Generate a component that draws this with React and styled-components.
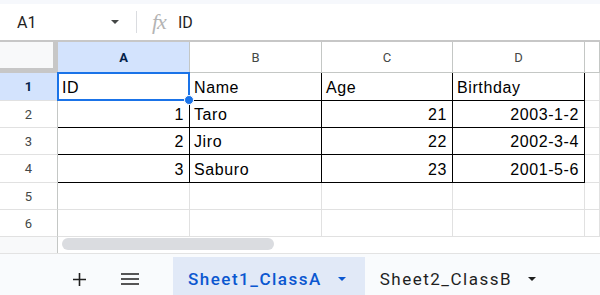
import React from 'react'
import styled, { createGlobalStyle } from 'styled-components'

const GlobalStyle = createGlobalStyle`
  html, body {
    margin: 0;
    padding: 0;
    background: #fff;
    font-family: Roboto, 'Liberation Sans', sans-serif;
  }
`

const COLS = ['58px', '132px', '132px', '131px', '132px', '1fr']
const ROW_HEIGHTS = [28, 27, 27, 28, 27, 27]

const data = [
  ['ID', 'Name', 'Age', 'Birthday'],
  [1, 'Taro', 21, '2003-1-2'],
  [2, 'Jiro', 22, '2002-3-4'],
  [3, 'Saburo', 23, '2001-5-6'],
]

const Page = styled.div`
  width: 600px;
  height: 295px;
  overflow: hidden;
  display: flex;
  flex-direction: column;
`

const TopStrip = styled.div`
  height: 4px;
  background: #f6f8fc;
`

const FormulaBar = styled.div`
  height: 36px;
  display: flex;
  align-items: center;
  border-bottom: 2px solid #c7c7c7;
  background: #fff;
`

const NameBox = styled.div`
  width: 137px;
  box-sizing: border-box;
  padding-left: 17px;
  display: flex;
  align-items: center;
  justify-content: space-between;
  font-size: 16px;
  color: #1f1f1f;
  padding-right: 17px;
  border-right: 1px solid #dadce0;
  height: 22px;
`

const Caret = styled.span`
  width: 0;
  height: 0;
  border-left: 4.5px solid transparent;
  border-right: 4.5px solid transparent;
  border-top: 4.5px solid ${p => p.$color || '#444746'};
`

const Fx = styled.span`
  font-family: 'Liberation Serif', serif;
  font-style: italic;
  font-size: 22px;
  color: #b4b4b4;
  margin-left: 15px;
  letter-spacing: -1px;
  line-height: 1;
`

const FormulaText = styled.span`
  font-size: 16px;
  color: #1f1f1f;
  margin-left: 12px;
`

const Grid = styled.div`
  display: grid;
  grid-template-columns: ${COLS.join(' ')};
  grid-template-rows: 31px ${ROW_HEIGHTS.map(h => h + 'px').join(' ')} 16px;
`

const Corner = styled.div`
  background: #f8f9fa;
  border-right: 5px solid #c7c7c7;
  border-bottom: 5px solid #c7c7c7;
`

const ColHeader = styled.div`
  background: ${p => (p.$active ? '#d3e3fd' : '#fff')};
  color: ${p => (p.$active ? '#041e49' : '#444746')};
  font-weight: ${p => (p.$active ? 700 : 400)};
  font-size: 13px;
  display: flex;
  align-items: center;
  justify-content: center;
  border-right: 1px solid #c4c7c5;
  border-bottom: 1px solid #c4c7c5;
`

const RowHeader = styled.div`
  background: ${p => (p.$active ? '#d3e3fd' : '#fff')};
  color: ${p => (p.$active ? '#041e49' : '#444746')};
  font-weight: ${p => (p.$active ? 700 : 400)};
  font-size: 13px;
  display: flex;
  align-items: center;
  justify-content: center;
  border-right: 1px solid #c4c7c5;
  border-bottom: 1px solid #e1e1e1;
`

const Cell = styled.div`
  position: relative;
  font-family: 'Liberation Sans', Arial, sans-serif;
  font-size: 16px;
  letter-spacing: 0.6px;
  color: #000;
  display: flex;
  align-items: flex-end;
  padding: 0 5px 3px 4px;
  justify-content: ${p => (p.$right ? 'flex-end' : 'flex-start')};
  border-right: 1px solid ${p => (p.$data ? '#000' : '#e1e1e1')};
  border-bottom: 1px solid ${p => (p.$data ? '#000' : '#e1e1e1')};
  white-space: nowrap;
  overflow: visible;
`

const Selection = styled.div`
  position: absolute;
  left: -1px;
  top: -1px;
  right: -1px;
  bottom: -1px;
  border: 2px solid #1a73e8;
  pointer-events: none;
  z-index: 2;
`

const FillHandle = styled.div`
  position: absolute;
  right: -5px;
  bottom: -5px;
  width: 8px;
  height: 8px;
  border-radius: 50%;
  background: #1a73e8;
  border: 1px solid #fff;
  z-index: 3;
`

const ScrollGutter = styled.div`
  background: #f8f9fa;
  border-right: 1px solid #c4c7c5;
`

const ScrollTrack = styled.div`
  grid-column: 2 / -1;
  padding: 1px 0 3px 4px;
`

const Thumb = styled.div`
  width: 212px;
  height: 12px;
  border-radius: 6px;
  background: #dadce0;
`

const BottomBar = styled.div`
  flex: 1;
  background: #f9fbfd;
  border-top: 1px solid #e3e3e3;
  display: flex;
  align-items: flex-end;
`

const Spacer = styled.div`
  width: ${p => p.$w}px;
  flex: none;
`

const IconButton = styled.button`
  width: 40px;
  height: 38px;
  border: none;
  background: transparent;
  display: flex;
  align-items: center;
  justify-content: center;
  padding: 6px 0 0;
  color: #1f1f1f;
`

const Tab = styled.div`
  height: 38px;
  box-sizing: border-box;
  display: flex;
  align-items: center;
  gap: 16px;
  padding: 6px 19px 0 15px;
  background: ${p => (p.$active ? '#e1e9f7' : 'transparent')};
  color: ${p => (p.$active ? '#0b57d0' : '#1f1f1f')};
  font-size: 17px;
  font-weight: ${p => (p.$active ? 500 : 400)};
  letter-spacing: 1.5px;
  white-space: nowrap;
`

const letters = ['A', 'B', 'C', 'D', '']

export default function App() {
  return (
    <Page>
      <GlobalStyle />
      <TopStrip />
      <FormulaBar>
        <NameBox>
          A1
          <Caret />
        </NameBox>
        <Fx>fx</Fx>
        <FormulaText>ID</FormulaText>
      </FormulaBar>

      <Grid>
        <Corner />
        {letters.map((l, i) => (
          <ColHeader key={i} $active={l === 'A'}>
            {l}
          </ColHeader>
        ))}

        {ROW_HEIGHTS.map((_, r) => (
          <React.Fragment key={r}>
            <RowHeader $active={r === 0}>{r + 1}</RowHeader>
            {[0, 1, 2, 3, 4].map(c => {
              const value = data[r] ? data[r][c] : undefined
              const isData = r < 4 && c < 4
              return (
                <Cell key={c} $data={isData} $right={typeof value === 'number' || (r > 0 && c === 3)}>
                  {value}
                  {r === 0 && c === 0 && (
                    <>
                      <Selection />
                      <FillHandle />
                    </>
                  )}
                </Cell>
              )
            })}
          </React.Fragment>
        ))}

        <ScrollGutter />
        <ScrollTrack>
          <Thumb />
        </ScrollTrack>
      </Grid>

      <BottomBar>
        <Spacer $w={59} />
        <IconButton aria-label="add sheet">
          <svg width="13" height="13" viewBox="0 0 13 13">
            <path d="M6.5 0v13M0 6.5h13" stroke="#1f1f1f" strokeWidth="1.6" />
          </svg>
        </IconButton>
        <Spacer $w={11} />
        <IconButton aria-label="all sheets">
          <svg width="18" height="12" viewBox="0 0 18 12">
            <path d="M0 1h18M0 6h18M0 11h18" stroke="#1f1f1f" strokeWidth="1.6" />
          </svg>
        </IconButton>
        <Spacer $w={23} />
        <Tab $active>
          Sheet1_ClassA
          <Caret $color="#0b57d0" />
        </Tab>
        <Tab>
          Sheet2_ClassB
          <Caret $color="#1f1f1f" />
        </Tab>
      </BottomBar>
    </Page>
  )
}
